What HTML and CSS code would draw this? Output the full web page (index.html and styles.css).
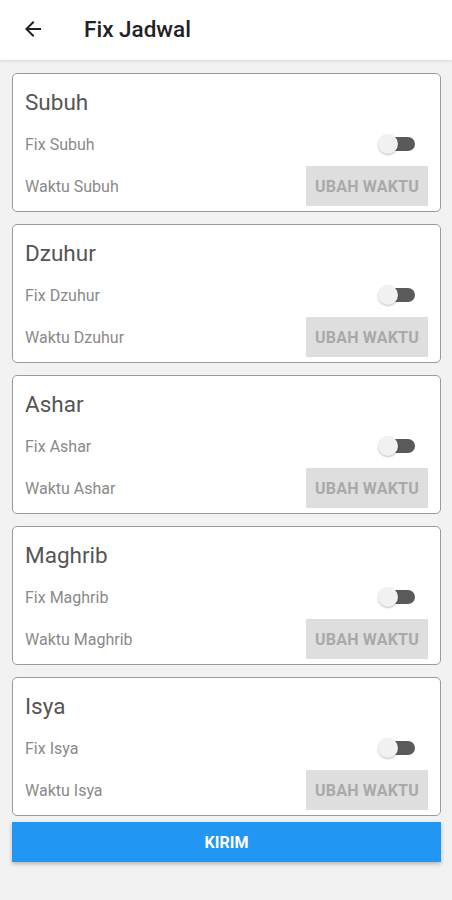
FILE: index.html
```html
<!doctype html>
<html lang="en">
<head>
  <meta charset="utf-8">
  <meta name="viewport" content="width=device-width, initial-scale=1.0" />
  <title>Fix Jadwal</title>
  <link rel="stylesheet" href="styles.css">
</head>
<body>
<header class="appbar">
  <button class="back" aria-label="Kembali">
    <svg width="24" height="24" viewBox="0 0 24 24"><path d="M20 11H7.83l5.59-5.59L12 4l-8 8 8 8 1.41-1.41L7.83 13H20v-2z" fill="#222"/></svg>
  </button>
  <h1>Fix Jadwal</h1>
</header>

<main class="list">
  <section class="card">
    <h2>Subuh</h2>
    <div class="row">
      <span>Fix Subuh</span>
      <span class="switch"><i></i></span>
    </div>
    <div class="row time">
      <span>Waktu Subuh</span>
      <button class="flat">UBAH WAKTU</button>
    </div>
  </section>

  <section class="card">
    <h2>Dzuhur</h2>
    <div class="row">
      <span>Fix Dzuhur</span>
      <span class="switch"><i></i></span>
    </div>
    <div class="row time">
      <span>Waktu Dzuhur</span>
      <button class="flat">UBAH WAKTU</button>
    </div>
  </section>

  <section class="card">
    <h2>Ashar</h2>
    <div class="row">
      <span>Fix Ashar</span>
      <span class="switch"><i></i></span>
    </div>
    <div class="row time">
      <span>Waktu Ashar</span>
      <button class="flat">UBAH WAKTU</button>
    </div>
  </section>

  <section class="card">
    <h2>Maghrib</h2>
    <div class="row">
      <span>Fix Maghrib</span>
      <span class="switch"><i></i></span>
    </div>
    <div class="row time">
      <span>Waktu Maghrib</span>
      <button class="flat">UBAH WAKTU</button>
    </div>
  </section>

  <section class="card">
    <h2>Isya</h2>
    <div class="row">
      <span>Fix Isya</span>
      <span class="switch"><i></i></span>
    </div>
    <div class="row time">
      <span>Waktu Isya</span>
      <button class="flat">UBAH WAKTU</button>
    </div>
  </section>

  <button class="submit">KIRIM</button>
</main>
</body>
</html>
```

FILE: styles.css
```css
body {
  margin: 0;
  background: #f2f2f2;
  font-family: Roboto, "Noto Sans", sans-serif;
  min-height: 900px;
}
.appbar {
  height: 60px;
  background: #fff;
  display: flex;
  align-items: center;
  box-shadow: 0 1px 3px rgba(0,0,0,0.12);
}
.back {
  border: none;
  background: none;
  padding: 0;
  margin-left: 21px;
  width: 24px;
  height: 24px;
  margin-top: -2px;
}
.appbar h1 {
  margin: -2px 0 0 39px;
  font-size: 22.5px;
  font-weight: 500;
  color: #222;
}
.list {
  padding: 13px 11px 0 12px;
  display: flex;
  flex-direction: column;
  gap: 12px;
}
.card {
  background: #fff;
  border: 1px solid #9a9a9a;
  border-radius: 5px;
  padding: 0 12px 5px 12px;
  height: 139px;
  box-sizing: border-box;
}
.card h2 {
  margin: 14px 0 0 0;
  height: 28px;
  line-height: 28px;
  font-size: 22.5px;
  font-weight: 400;
  color: #555;
}
.row {
  display: flex;
  align-items: center;
  justify-content: space-between;
  height: 40px;
  margin-top: 8px;
  font-size: 16px;
  color: #8a8a8a;
}
.row.time {
  margin-top: 2px;
}
.switch {
  position: relative;
  width: 37px;
  height: 20px;
  margin-right: 13px;
}
.switch::before {
  content: "";
  position: absolute;
  left: 10px;
  right: 0;
  top: 3px;
  height: 14px;
  border-radius: 7px;
  background: #5a5a5a;
}
.switch i {
  position: absolute;
  left: 0;
  top: 0;
  width: 20px;
  height: 20px;
  border-radius: 50%;
  background: #f1f1f1;
  box-shadow: 0 1px 2px rgba(0,0,0,0.25);
}
.flat {
  width: 122px;
  height: 40px;
  border: none;
  background: #dedede;
  color: #a9a9a9;
  font-family: Roboto, "Noto Sans", sans-serif;
  font-size: 16px;
  font-weight: 700;
  letter-spacing: 0.2px;
  padding: 0;
}
.submit {
  margin-top: -6px;
  height: 40px;
  border: none;
  background: #2196f3;
  color: #fff;
  font-family: Roboto, "Noto Sans", sans-serif;
  font-size: 16px;
  font-weight: 700;
  box-shadow: 0 2px 4px rgba(0,0,0,0.25);
}
```
